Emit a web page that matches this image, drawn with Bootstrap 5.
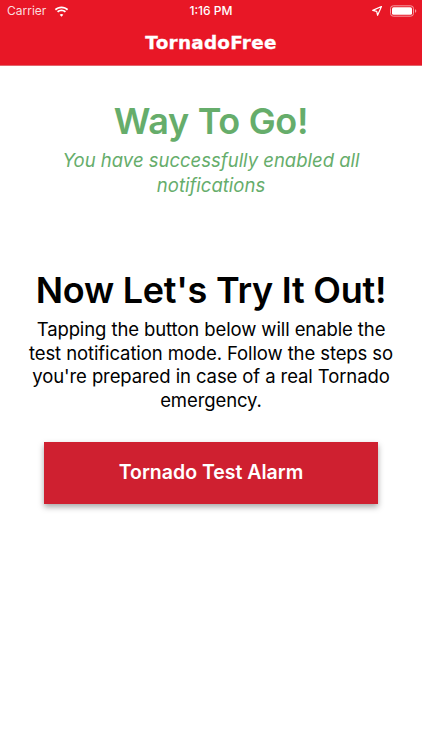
<!DOCTYPE html>
<html lang="en">
<head>
<meta charset="utf-8">
<title>TornadoFree</title>
<link href="https://cdn.jsdelivr.net/npm/bootstrap@5.3.0/dist/css/bootstrap.min.css" rel="stylesheet">
<style>
html,body{margin:0;height:100%;background:#fff;}
body{font-family:Inter,"Liberation Sans",sans-serif;color:#000;overflow:hidden;}
.app-head{background:#e81726;color:#fff;height:66px;border-bottom:1px solid #e2656c;}
.stat-bar{height:22px;padding:0 5px 0 7px;font-size:12px;line-height:22px;position:relative;}
.stat-time{font-weight:500;font-size:12px;}
.carrier{font-weight:400;color:#fbdcdf;}
.app-title{font-family:"DejaVu Sans",sans-serif;font-weight:700;font-size:18.400px;line-height:42px;text-align:center;letter-spacing:.25px;-webkit-text-stroke:.3px #fff;}
.green-head{color:#66ad6b;font-size:36px;font-weight:600;line-height:46px;margin:32px 0 0;letter-spacing:-.3px;}
.green-sub{color:#66ad6b;font-size:18.500px;font-style:italic;font-weight:400;line-height:24.500px;margin:4px auto 0;width:330px;}
.try-head{font-size:36px;font-weight:600;line-height:44px;margin:71px 0 0;letter-spacing:-.25px;}
.try-text{font-size:18.500px;line-height:23.700px;margin:6px auto 0;width:376px;letter-spacing:-.1px;}
.alarm-btn{display:block;width:334px;height:62px;margin:29px auto 0;background:#cf2030;color:#fff;font-size:19.500px;font-weight:600;border:0;border-radius:0;box-shadow:0 3px 6px rgba(0,0,0,.35);}
.alarm-btn:hover{background:#cf2030;color:#fff;}
</style>
</head>
<body>
<header class="app-head">
  <div class="stat-bar d-flex align-items-center justify-content-between">
    <div class="d-flex align-items-center">
      <span class="carrier">Carrier</span>
      <svg width="15" height="11" viewBox="0 0 15 11" class="ms-2"><path d="M7.5 2.2c2.1 0 4 .8 5.500 2.200l1.200-1.300C12.400 1.400 10 .4 7.500.4S2.600 1.400.8 3.100L2 4.400c1.500-1.400 3.400-2.200 5.500-2.200zM7.500 5.200c1.300 0 2.400.5 3.300 1.300l1.200-1.300c-1.200-1.100-2.800-1.800-4.500-1.800S4.200 4.100 3 5.200l1.200 1.300c.9-.8 2-1.300 3.300-1.300zM7.500 8c-.7 0-1.300.3-1.800.7l1.800 2 1.800-2C8.800 8.300 8.200 8 7.500 8z" fill="#fff"/></svg>
    </div>
    <span class="stat-time position-absolute top-0 start-50 translate-middle-x">1:16 PM</span>
    <div class="d-flex align-items-center">
      <svg width="10" height="10" viewBox="0 0 10 10" class="me-2"><path d="M9.500.5 5.600 9.300 4.700 5.300.7 4.400z" fill="none" stroke="#fff" stroke-width="1.200" stroke-linejoin="round"/></svg>
      <svg width="27" height="12" viewBox="0 0 27 12"><rect x=".5" y=".8" width="23" height="10.400" rx="2.800" fill="none" stroke="#f59aa1"/><rect x="2" y="2.200" width="20" height="7.600" rx="1.500" fill="#fff"/><path d="M25 4.300c.8.200 1.300.9 1.300 1.700s-.5 1.500-1.300 1.700z" fill="#f59aa1"/></svg>
    </div>
  </div>
  <div class="app-title">TornadoFree</div>
</header>
<main class="text-center">
  <h1 class="green-head">Way To Go!</h1>
  <p class="green-sub">You have successfully enabled all notifications</p>
  <h2 class="try-head">Now Let's Try It Out!</h2>
  <p class="try-text">Tapping the button below will enable the test notification mode. Follow the steps so you're prepared in case of a real Tornado emergency.</p>
  <button type="button" class="btn alarm-btn">Tornado Test Alarm</button>
</main>
<script src="https://cdn.jsdelivr.net/npm/bootstrap@5.3.0/dist/js/bootstrap.bundle.min.js"></script>
</body>
</html>
